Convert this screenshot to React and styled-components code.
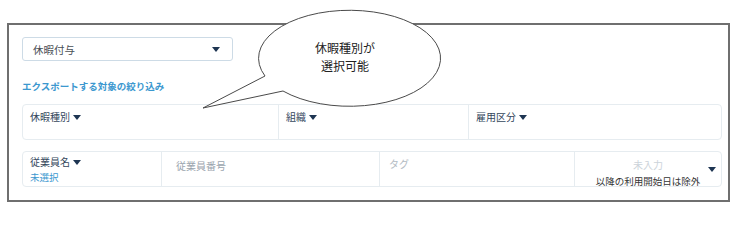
import React from "react";
import styled, { createGlobalStyle } from "styled-components";

const GlobalStyle = createGlobalStyle`
  body {
    margin: 0;
    background: #fff;
    font-family: "Noto Sans CJK JP", "Noto Sans", sans-serif;
  }
`;

const Page = styled.div`
  position: relative;
  width: 737px;
  height: 208px;
  padding: 23px 0 0 7px;
  box-sizing: border-box;
`;

const Panel = styled.div`
  width: 723px;
  height: 179px;
  box-sizing: border-box;
  border: 2px solid #6f6f6f;
  padding: 12px 6px 0 13px;
  display: flex;
  flex-direction: column;
`;

const Select = styled.div`
  width: 211px;
  height: 24px;
  box-sizing: border-box;
  border: 1px solid #cddbe6;
  border-radius: 3px;
  display: flex;
  align-items: center;
  justify-content: space-between;
  padding: 0 12px 0 10px;
  font-size: 10.5px;
  color: #4a4f55;
`;

const Caret = styled.span`
  display: inline-block;
  width: 0;
  height: 0;
  border-left: ${(p) => p.size || 4}px solid transparent;
  border-right: ${(p) => p.size || 4}px solid transparent;
  border-top: ${(p) => (p.size || 4) + 1}px solid #1e3552;
  margin-left: ${(p) => p.gap || 0}px;
`;

const FilterTitle = styled.div`
  margin-top: 18px;
  font-size: 9.5px;
  line-height: 14px;
  font-weight: 700;
  color: #3c98cf;
`;

const Row = styled.div`
  margin-top: ${(p) => p.top}px;
  width: 700px;
  height: 36px;
  box-sizing: border-box;
  border: 1px solid #e6ecf0;
  border-radius: 4px;
  display: grid;
  grid-template-columns: ${(p) => p.cols};
`;

const Cell = styled.div`
  position: relative;
  border-left: ${(p) => (p.first ? "none" : "1px solid #e6ecf0")};
  padding: ${(p) => p.pad || "5px 0 0 7px"};
  display: flex;
  flex-direction: column;
  align-items: ${(p) => (p.center ? "center" : "flex-start")};
`;

const Label = styled.div`
  display: flex;
  align-items: center;
  font-size: 10px;
  line-height: ${(p) => p.lh || 14}px;
  color: #34475c;
`;

const SubValue = styled.div`
  font-size: 9.5px;
  line-height: 14px;
  color: #3c98cf;
`;

const Placeholder = styled.div`
  font-size: 10px;
  line-height: 14px;
  color: ${(p) => p.tone};
`;

const Note = styled.div`
  margin-top: 3px;
  font-size: 9.5px;
  line-height: 12px;
  color: #333;
`;

const SideCaret = styled.div`
  position: absolute;
  right: 5px;
  top: 15px;
  display: flex;
`;

const Bubble = styled.div`
  position: absolute;
  left: 200px;
  top: 0;
  width: 245px;
  height: 112px;
`;

const BubbleText = styled.div`
  position: absolute;
  left: 90px;
  top: 39px;
  width: 110px;
  text-align: center;
  font-size: 12px;
  line-height: 17.5px;
  color: #222;
`;

export default function App() {
  return (
    <Page>
      <GlobalStyle />
      <Panel>
        <Select>
          <span>休暇付与</span>
          <Caret size={4} />
        </Select>
        <FilterTitle>エクスポートする対象の絞り込み</FilterTitle>
        <Row top={11} cols="255px 190px 1fr">
          <Cell first>
            <Label>
              休暇種別
              <Caret size={4} gap={3} />
            </Label>
          </Cell>
          <Cell>
            <Label>
              組織
              <Caret size={4} gap={3} />
            </Label>
          </Cell>
          <Cell>
            <Label>
              雇用区分
              <Caret size={4} gap={3} />
            </Label>
          </Cell>
        </Row>
        <Row top={11} cols="138px 218px 195px 1fr">
          <Cell first pad="3px 0 0 7px">
            <Label lh={14.5}>
              従業員名
              <Caret size={4} gap={3} />
            </Label>
            <SubValue>未選択</SubValue>
          </Cell>
          <Cell pad="7px 0 0 14px">
            <Placeholder tone="#9aa4ae">従業員番号</Placeholder>
          </Cell>
          <Cell pad="5px 0 0 9px">
            <Placeholder tone="#b3bbc3">タグ</Placeholder>
          </Cell>
          <Cell center pad="6px 0 0 0">
            <Placeholder tone="#ccd3da">未入力</Placeholder>
            <Note>以降の利用開始日は除外</Note>
            <SideCaret>
              <Caret size={4} />
            </SideCaret>
          </Cell>
        </Row>
      </Panel>
      <Bubble>
        <svg width="245" height="112" viewBox="0 0 245 112">
          <path
            d="M65,76 A91,48 0 1 1 83,91 L3,108 Z"
            fill="#fff"
            stroke="#4a4a4a"
            strokeWidth="1"
          />
        </svg>
        <BubbleText>
          休暇種別が
          <br />
          選択可能
        </BubbleText>
      </Bubble>
    </Page>
  );
}
